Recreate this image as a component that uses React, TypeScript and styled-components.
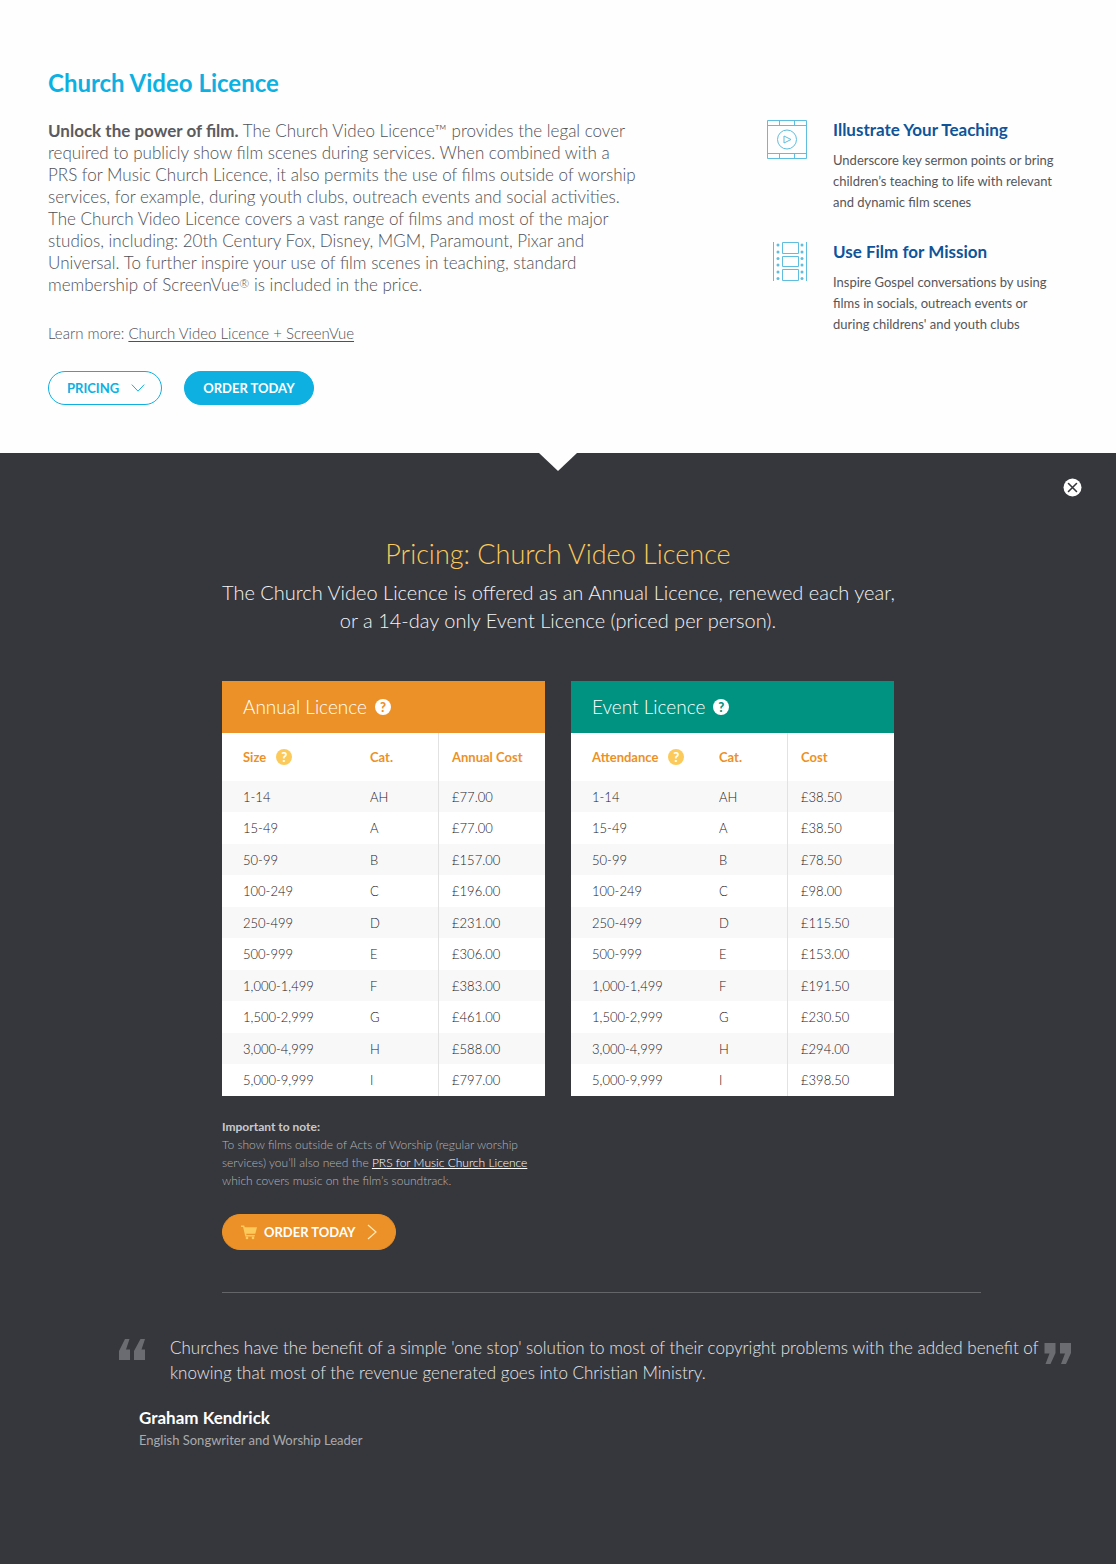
import React from 'react';
import styled, { createGlobalStyle } from 'styled-components';

const GlobalStyle = createGlobalStyle`
  *, *::before, *::after { box-sizing: border-box; }
  body {
    margin: 0;
    background: #36373c;
    font-family: Lato, "Open Sans", "Noto Sans", sans-serif;
    font-weight: 300;
  }
  h1, h2, h3, p, ul, blockquote, figure { margin: 0; padding: 0; }
  button { font-family: inherit; cursor: pointer; }
`;

const Intro = styled.section`
  display: grid;
  grid-template-columns: minmax(0, 1fr) 301px;
  column-gap: 48px;
  padding: 68px 48px 48px;
  background: #fefefe;
`;

const IntroTitle = styled.h1`
  grid-column: 1 / -1;
  margin-bottom: 22px;
  font-size: 24px;
  line-height: 30px;
  font-weight: 700;
  color: #0eb0e2;
`;

const IntroText = styled.div`
  font-size: 17px;
  line-height: 22px;
  color: #505155;

  strong { font-weight: 700; color: #5a5b5f; }
`;

const Registered = styled.span`
  font-size: 12px;
  line-height: 12px;
  vertical-align: 3px;
`;

const LearnMore = styled.p`
  margin-top: 26px;
  font-size: 15px;

  a { color: inherit; text-underline-offset: 2px; }
`;

const Actions = styled.div`
  display: flex;
  gap: 22px;
  margin-top: 27px;
`;

const PillButton = styled.button<{ $tone: 'outline' | 'blue' | 'orange' }>`
  display: inline-flex;
  align-items: center;
  height: ${p => (p.$tone === 'orange' ? 36 : 34)}px;
  padding: 0 ${p => (p.$tone === 'outline' ? 16 : 18)}px 0 18px;
  border: 1px solid ${p => (p.$tone === 'orange' ? '#ec9127' : '#0eb0e2')};
  border-radius: 20px;
  background: ${p => ({ outline: '#fefefe', blue: '#0eb0e2', orange: '#ec9127' })[p.$tone]};
  color: ${p => (p.$tone === 'outline' ? '#0eb0e2' : '#ffffff')};
  font-size: 13px;
  font-weight: 700;
  white-space: nowrap;
`;

const LeadingIcon = styled.svg`
  margin-right: 7px;
`;

const TrailingIcon = styled.svg`
  margin-left: 12px;
  fill: none;
`;

const Features = styled.ul`
  display: grid;
  align-content: start;
  row-gap: 29px;
  list-style: none;
`;

const Feature = styled.li`
  display: grid;
  grid-template-columns: 40px minmax(0, 1fr);
  column-gap: 26px;
  align-items: start;
`;

const FeatureTitle = styled.h2`
  margin-bottom: 10px;
  font-size: 17px;
  line-height: 20px;
  font-weight: 700;
  color: #0f5499;
`;

const FeatureText = styled.p`
  font-size: 13px;
  line-height: 21px;
  font-weight: 400;
  color: #55565a;
`;

const Pricing = styled.section`
  position: relative;
  padding: 84px 0 113px;
  background: #36373c;

  &::before {
    content: "";
    position: absolute;
    top: 0;
    left: 50%;
    width: 38px;
    height: 18px;
    transform: translateX(-50%);
    background: #fefefe;
    clip-path: polygon(0 0, 100% 0, 50% 100%);
  }
`;

const CloseButton = styled.button`
  position: absolute;
  top: 25px;
  right: 34px;
  width: 19px;
  height: 19px;
  padding: 0;
  border: 0;
  background: none;

  svg { display: block; }
`;

const PricingBody = styled.div`
  max-width: 672px;
  margin: 0 auto;
`;

const PricingTitle = styled.h2`
  font-size: 27px;
  line-height: 34px;
  font-weight: 300;
  text-align: center;
  color: #fbca5a;
`;

const PricingLead = styled.p`
  margin: 7px 0 47px;
  font-size: 20px;
  line-height: 28px;
  text-align: center;
  white-space: nowrap;
  color: #f4f4f5;
`;

const Tables = styled.div`
  display: grid;
  grid-template-columns: 1fr 1fr;
  gap: 26px;
`;

const Card = styled.section`
  background: #ffffff;
`;

const CardTitle = styled.h3<{ $color: string }>`
  display: flex;
  align-items: center;
  gap: 8px;
  height: 52px;
  padding: 0 0 1px 21px;
  background: ${p => p.$color};
  color: #ffffff;
  font-size: 19px;
  font-weight: 300;
`;

const Help = styled.button<{ $back: string; $mark: string }>`
  display: inline-flex;
  align-items: center;
  justify-content: center;
  width: 16px;
  height: 16px;
  padding: 0;
  border: 0;
  border-radius: 50%;
  background: ${p => p.$back};
  color: ${p => p.$mark};
  font-size: 13px;
  line-height: 16px;
  font-weight: 900;
`;

const HeadLabel = styled.span`
  display: flex;
  align-items: center;
  gap: 10px;
`;

const PriceTable = styled.table`
  width: 100%;
  table-layout: fixed;
  border-collapse: separate;
  border-spacing: 0;
  font-size: 13px;

  th, td {
    padding: 0 0 0 21px;
    text-align: left;
    white-space: nowrap;
  }
  th { height: 48px; font-weight: 700; color: #ec9127; }
  td { height: 31px; font-weight: 300; color: #1f2024; }
  th:nth-child(1) { width: 127px; }
  th:nth-child(2) { width: 90px; }
  th:nth-child(2), td:nth-child(2) { border-right: 1px solid #e2e2e3; }
  th:nth-child(3), td:nth-child(3) { padding-left: 13px; }
  tbody tr:nth-child(odd) { background: #f8f8f8; }
  tbody tr:nth-child(even) td { height: 32px; }
`;

const Note = styled.p`
  margin: 22px 0 24px;
  font-size: 12px;
  line-height: 18px;
  color: #b4b5b8;

  strong { font-weight: 700; color: #c9cacc; }
  a { color: #ffffff; }
`;

const Divider = styled.hr`
  height: 1px;
  margin: 42px 135px 42px 222px;
  border: 0;
  background: #646569;
`;

const Testimonial = styled.figure`
  display: grid;
  grid-template-columns: 28px minmax(0, 1fr) 28px;
  column-gap: 24px;
  padding: 0 44px 0 118px;
`;

const Quote = styled.blockquote`
  font-size: 17px;
  line-height: 25px;
  white-space: nowrap;
  color: #e6e6e7;
`;

const QuoteMark = styled.svg<{ $drop: number }>`
  display: block;
  width: 28px;
  height: 22px;
  margin-top: ${p => p.$drop}px;
  fill: #6b6c71;
`;

const Author = styled.figcaption`
  grid-column: 1 / -1;
  margin: 22px 0 0 21px;
  font-size: 13px;
  line-height: 22px;
  font-weight: 400;
  color: #a9aaad;

  strong {
    display: block;
    font-size: 17px;
    font-weight: 700;
    color: #ffffff;
  }
`;

const blueLine = { fill: 'none', stroke: '#5fbddd', strokeWidth: 1 };

const PlayFrameIcon = () => (
  <svg width="40" height="40" viewBox="0 0 40 40" aria-hidden="true" {...blueLine}>
    <path d="M.5.5h39v38H.5zM.5 5.500h39M.5 33.500h39M12.500.5v5M27.500.5v5M12.500 33.500v5M27.500 33.500v5" />
    <circle cx="20" cy="19.500" r="9.500" />
    <path d="M17 16v7l7-3.500z" strokeLinejoin="round" />
  </svg>
);

const FilmStripIcon = () => (
  <svg width="40" height="40" viewBox="0 0 40 40" aria-hidden="true" {...blueLine}>
    <path d="M6.500 0v39M39.500 0v39M15.500.5h16v11h-16zM15.500 14.500h16v10h-16zM15.500 27.500h16v11h-16z" />
    {[11, 35].map(x => (
      [3, 10, 16.5, 23, 30, 36.5].map(y => (
        <circle key={`${x}-${y}`} cx={x} cy={y} r="1.500" fill="#5fbddd" stroke="none" />
      ))
    ))}
  </svg>
);

const annual = ['77.00', '77.00', '157.00', '196.00', '231.00', '306.00', '383.00', '461.00', '588.00', '797.00'];
const event = ['38.50', '38.50', '78.50', '98.00', '115.50', '153.00', '191.50', '230.50', '294.00', '398.50'];
const bands = [
  ['1-14', 'AH'], ['15-49', 'A'], ['50-99', 'B'], ['100-249', 'C'], ['250-499', 'D'],
  ['500-999', 'E'], ['1,000-1,499', 'F'], ['1,500-2,999', 'G'], ['3,000-4,999', 'H'], ['5,000-9,999', 'I'],
];

type LicenceProps = { title: string; color: string; size: string; cost: string; prices: string[] };

const LicenceCard = ({ title, color, size, cost, prices }: LicenceProps) => (
  <Card>
    <CardTitle $color={color}>
      {title}
      <Help type="button" aria-label={`About the ${title}`} $back="#ffffff" $mark={color}>?</Help>
    </CardTitle>
    <PriceTable aria-label={title}>
      <thead>
        <tr>
          <th scope="col">
            <HeadLabel>
              {size}
              <Help type="button" aria-label={`About ${size}`} $back="#fbca5a" $mark="#ffffff">?</Help>
            </HeadLabel>
          </th>
          <th scope="col">Cat.</th>
          <th scope="col">{cost}</th>
        </tr>
      </thead>
      <tbody>
        {bands.map(([range, cat], i) => (
          <tr key={cat}>
            <td>{range}</td>
            <td>{cat}</td>
            <td>£{prices[i]}</td>
          </tr>
        ))}
      </tbody>
    </PriceTable>
  </Card>
);

export default function App() {
  return (
    <main>
      <GlobalStyle />
      <Intro>
        <IntroTitle>Church Video Licence</IntroTitle>
        <IntroText>
          <p>
            <strong>Unlock the power of film.</strong> The Church Video Licence™ provides the legal cover<br />
            required to publicly show film scenes during services. When combined with a<br />
            PRS for Music Church Licence, it also permits the use of films outside of worship<br />
            services, for example, during youth clubs, outreach events and social activities.<br />
            The Church Video Licence covers a vast range of films and most of the major<br />
            studios, including: 20th Century Fox, Disney, MGM, Paramount, Pixar and<br />
            Universal. To further inspire your use of film scenes in teaching, standard<br />
            membership of ScreenVue<Registered>®</Registered> is included in the price.
          </p>
          <LearnMore>
            Learn more: <a href="#screenvue">Church Video Licence + ScreenVue</a>
          </LearnMore>
          <Actions>
            <PillButton type="button" $tone="outline">
              PRICING
              <TrailingIcon width="14" height="8" viewBox="0 0 14 8" stroke="currentColor" aria-hidden="true">
                <path d="M.8.6 7 7.200 13.200.6" />
              </TrailingIcon>
            </PillButton>
            <PillButton type="button" $tone="blue">ORDER TODAY</PillButton>
          </Actions>
        </IntroText>
        <Features>
          <Feature>
            <PlayFrameIcon />
            <div>
              <FeatureTitle>Illustrate Your Teaching</FeatureTitle>
              <FeatureText>
                Underscore key sermon points or bring<br />
                children’s teaching to life with relevant<br />
                and dynamic film scenes
              </FeatureText>
            </div>
          </Feature>
          <Feature>
            <FilmStripIcon />
            <div>
              <FeatureTitle>Use Film for Mission</FeatureTitle>
              <FeatureText>
                Inspire Gospel conversations by using<br />
                films in socials, outreach events or<br />
                during childrens' and youth clubs
              </FeatureText>
            </div>
          </Feature>
        </Features>
      </Intro>

      <Pricing>
        <CloseButton type="button" aria-label="Close pricing">
          <svg width="19" height="19" viewBox="0 0 19 19" aria-hidden="true">
            <circle cx="9.500" cy="9.500" r="9" fill="#ffffff" />
            <path d="m5.500 5.500 8 8m0-8-8 8" stroke="#36373c" strokeWidth="1.600" strokeLinecap="round" />
          </svg>
        </CloseButton>
        <PricingBody>
          <PricingTitle>Pricing: Church Video Licence</PricingTitle>
          <PricingLead>
            The Church Video Licence is offered as an Annual Licence, renewed each year,<br />
            or a 14-day only Event Licence (priced per person).
          </PricingLead>
          <Tables>
            <LicenceCard title="Annual Licence" color="#ec9127" size="Size" cost="Annual Cost" prices={annual} />
            <LicenceCard title="Event Licence" color="#009382" size="Attendance" cost="Cost" prices={event} />
          </Tables>
          <Note>
            <strong>Important to note:</strong><br />
            To show films outside of Acts of Worship (regular worship<br />
            services) you’ll also need the <a href="#prs">PRS for Music Church Licence</a><br />
            which covers music on the film’s soundtrack.
          </Note>
          <PillButton type="button" $tone="orange">
            <LeadingIcon width="16" height="15" viewBox="0 0 16 15" fill="#fbca5a" aria-hidden="true">
              <path d="M0 .5h3.200l.6 1.700H16L14.300 8.800H5.200l.3 1.200h8.300v1.600H4.300L2.100 1.900H0z" />
              <circle cx="6" cy="12.900" r="1.300" />
              <circle cx="12" cy="12.900" r="1.300" />
            </LeadingIcon>
            ORDER TODAY
            <TrailingIcon width="10" height="16" viewBox="0 0 10 16" stroke="#ffe9b8" strokeWidth="1.200" aria-hidden="true">
              <path d="m1 1 8 7-8 7" />
            </TrailingIcon>
          </PillButton>
        </PricingBody>
        <Divider />
        <Testimonial>
          <QuoteMark $drop={4} viewBox="0 0 28 22" aria-hidden="true">
            <path d="M7 0h4.500L8 10.500h4V21H1V12zM22.500 0H27l-3.500 10.500H27V21H16V12z" />
          </QuoteMark>
          <Quote>
            Churches have the benefit of a simple 'one stop' solution to most of their copyright problems with the added benefit of<br />
            knowing that most of the revenue generated goes into Christian Ministry.
          </Quote>
          <QuoteMark $drop={8} viewBox="0 0 28 22" aria-hidden="true">
            <path d="M.5 0h11v10L6.500 21H1.500L5.500 10.500h-5zM16 0h11v10l-5 11h-5l4-10.500h-5z" />
          </QuoteMark>
          <Author>
            <strong>Graham Kendrick</strong>
            English Songwriter and Worship Leader
          </Author>
        </Testimonial>
      </Pricing>
    </main>
  );
}
